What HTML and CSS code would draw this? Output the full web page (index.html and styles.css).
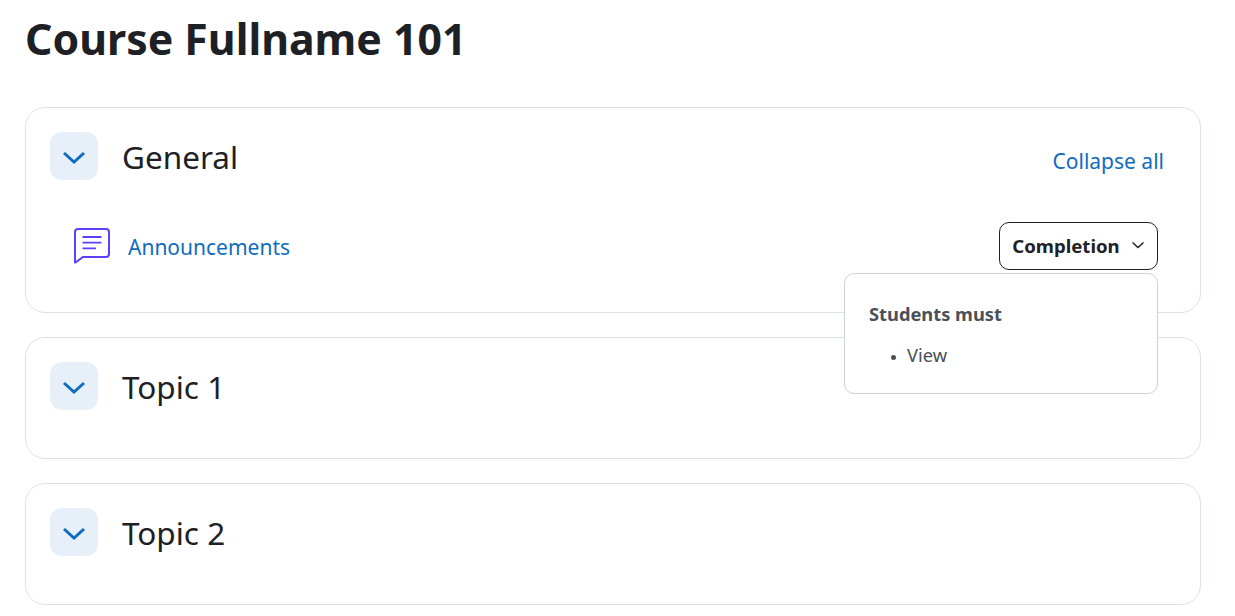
FILE: index.html
```html
<!DOCTYPE html>
<html lang="en">
<head>
    <meta charset="UTF-8">
    <title>Course Fullname 101</title>
    <link rel="stylesheet" href="styles.css">
</head>
<body>
    <h1>Course Fullname 101</h1>

    <div class="section">
        <div class="section-header">
            <button class="toggle" aria-label="Collapse General">
                <svg width="24" height="24" viewBox="0 0 24 24"><path d="M2 9l10 9 10-9" fill="none" stroke="#0f6cbf" stroke-width="3"/></svg>
            </button>
            <h2>General</h2>
            <a href="#" class="collapse-all">Collapse all</a>
        </div>
        <div class="activity">
            <svg class="activity-icon" width="38" height="38" viewBox="0 0 38 38">
                <path d="M5 2h28a3 3 0 0 1 3 3v22a3 3 0 0 1-3 3H10l-7.500 5.500a.3.3 0 0 1-.5-.3V5a3 3 0 0 1 3-3z" fill="none" stroke="#5b40ff" stroke-width="2"/>
                <path d="M9.500 10h19M9.500 15.700h19M9.500 21.300h13.500" fill="none" stroke="#5b40ff" stroke-width="1.800"/>
            </svg>
            <a href="#" class="activity-name">Announcements</a>
            <div class="completion">
                <button class="completion-btn">Completion
                    <svg width="14" height="14" viewBox="0 0 14 14"><path d="M1.500 4.500l5.500 5 5.500-5" fill="none" stroke="#1d2125" stroke-width="1.500"/></svg>
                </button>
                <div class="completion-menu">
                    <strong>Students must</strong>
                    <ul>
                        <li>View</li>
                    </ul>
                </div>
            </div>
        </div>
    </div>

    <div class="section">
        <div class="section-header">
            <button class="toggle" aria-label="Collapse Topic 1">
                <svg width="24" height="24" viewBox="0 0 24 24"><path d="M2 9l10 9 10-9" fill="none" stroke="#0f6cbf" stroke-width="3"/></svg>
            </button>
            <h2>Topic 1</h2>
        </div>
    </div>

    <div class="section">
        <div class="section-header">
            <button class="toggle" aria-label="Collapse Topic 2">
                <svg width="24" height="24" viewBox="0 0 24 24"><path d="M2 9l10 9 10-9" fill="none" stroke="#0f6cbf" stroke-width="3"/></svg>
            </button>
            <h2>Topic 2</h2>
        </div>
    </div>
</body>
</html>
```

FILE: styles.css
```css
body {
    font-family: "Noto Sans", "Open Sans", Arial, sans-serif;
    color: #1d2125;
    margin: 0;
    padding: 0 34px 0 25px;
    background: #fff;
    overflow: hidden;
}
h1 {
    font-size: 42.8px;
    font-weight: 700;
    line-height: 50px;
    margin: 0;
    padding: 14px 0 43px;
}
h2 {
    font-size: 31.5px;
    font-weight: 400;
    line-height: 48px;
    margin: 2px 0 0 24px;
    height: 48px;
}
a {
    color: #0f6cbf;
    text-decoration: none;
}
.section {
    border: 1px solid #dee2e6;
    border-radius: 20px;
    padding: 24px;
    height: 122px;
    box-sizing: border-box;
    margin-bottom: 24px;
}
.section:first-of-type {
    height: 206px;
}
.section-header {
    display: flex;
    align-items: center;
    height: 48px;
}
.toggle {
    width: 48px;
    height: 48px;
    border: none;
    border-radius: 12px;
    background-color: #e7eff8;
    padding: 0;
    display: flex;
    align-items: center;
    justify-content: center;
}
.collapse-all {
    margin-left: auto;
    margin-right: 12px;
    font-size: 21px;
    padding-top: 10px;
}
.activity {
    display: flex;
    align-items: center;
    margin-top: 42px;
    padding: 0 18px 0 23px;
}
.activity-icon {
    margin-right: 17px;
}
.activity-name {
    font-size: 21px;
    padding-top: 2px;
}
.completion {
    margin-left: auto;
    position: relative;
}
.completion-btn {
    font-family: inherit;
    font-size: 18.6px;
    font-weight: 700;
    color: #1d2125;
    background: #fff;
    border: 1px solid #1d2125;
    border-radius: 10px;
    height: 48px;
    width: 159px;
    padding: 0 0 2px;
    display: flex;
    align-items: center;
    justify-content: center;
    gap: 11px;
}
.completion-menu {
    position: absolute;
    top: 51px;
    right: 0;
    width: 314px;
    height: 121px;
    box-sizing: border-box;
    padding: 26px 24px;
    background: #fff;
    border: 1px solid #cfd1d4;
    border-radius: 10px;
    color: #495057;
    font-size: 18.3px;
}
.completion-menu strong {
    display: block;
    line-height: 27px;
}
.completion-menu ul {
    margin: 14px 0 0;
    padding-left: 38px;
    line-height: 27px;
}
.completion-menu li::marker {
    font-size: 13px;
}
```
